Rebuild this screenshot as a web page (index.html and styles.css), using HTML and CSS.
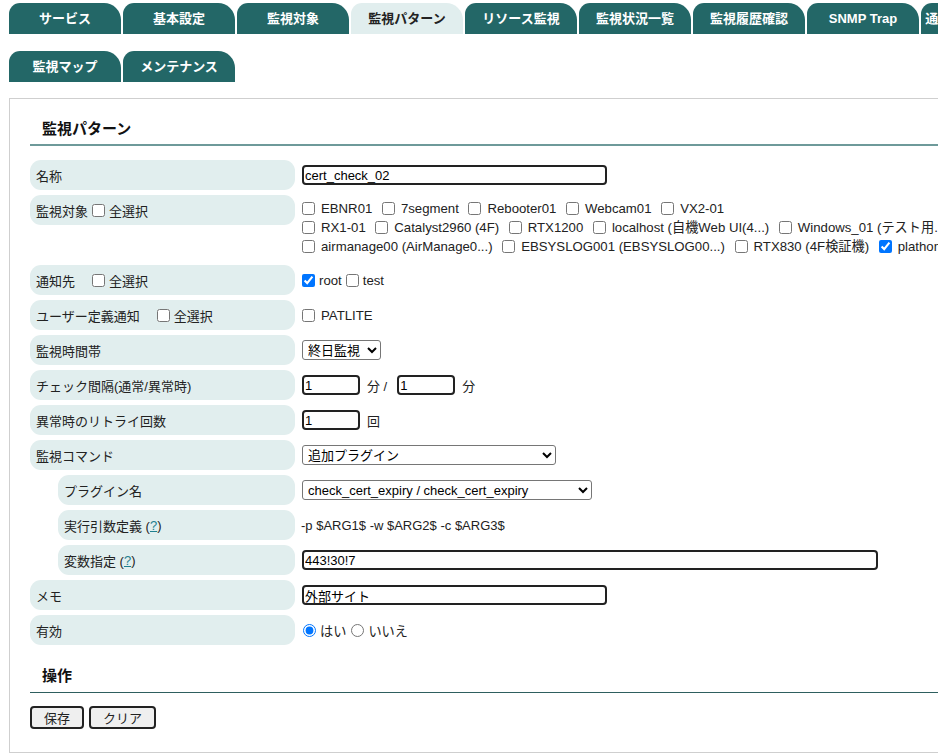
FILE: index.html
```html
<!DOCTYPE html>
<html lang="ja">
<head>
    <meta charset="UTF-8">
    <title>監視パターン</title>
    <link rel="stylesheet" href="styles.css">
</head>
<body>
    <div class="page">
        <nav class="tabs">
            <a class="tab">サービス</a>
            <a class="tab">基本設定</a>
            <a class="tab">監視対象</a>
            <a class="tab active">監視パターン</a>
            <a class="tab">リソース監視</a>
            <a class="tab">監視状況一覧</a>
            <a class="tab">監視履歴確認</a>
            <a class="tab">SNMP Trap</a>
            <a class="tab">通知ユーザー定義</a>
            <a class="tab">監視マップ</a>
            <a class="tab">メンテナンス</a>
        </nav>

        <div class="panel">
            <h2 class="section-title">監視パターン</h2>

            <div class="form">
                <div class="row">
                    <div class="label">名称</div>
                    <div class="value"><input type="text" class="text w-name" value="cert_check_02"></div>
                </div>

                <div class="row">
                    <div class="label">監視対象<input type="checkbox">全選択</div>
                    <div class="value list">
                        <label><input type="checkbox">EBNR01</label>
                        <label><input type="checkbox">7segment</label>
                        <label><input type="checkbox">Rebooter01</label>
                        <label><input type="checkbox">Webcam01</label>
                        <label><input type="checkbox">VX2-01</label><br>
                        <label><input type="checkbox">RX1-01</label>
                        <label><input type="checkbox">Catalyst2960 (4F)</label>
                        <label><input type="checkbox">RTX1200</label>
                        <label><input type="checkbox">localhost (自機Web UI(4...)</label>
                        <label><input type="checkbox">Windows_01 (テスト用...)</label><br>
                        <label><input type="checkbox">airmanage00 (AirManage0...)</label>
                        <label><input type="checkbox">EBSYSLOG001 (EBSYSLOG00...)</label>
                        <label><input type="checkbox">RTX830 (4F検証機)</label>
                        <label><input type="checkbox" checked>plathome01</label>
                    </div>
                </div>

                <div class="row">
                    <div class="label">通知先　<input type="checkbox">全選択</div>
                    <div class="value">
                        <label class="tight"><input type="checkbox" checked>root</label><label class="tight"><input type="checkbox">test</label>
                    </div>
                </div>

                <div class="row">
                    <div class="label">ユーザー定義通知　<input type="checkbox">全選択</div>
                    <div class="value"><label><input type="checkbox">PATLITE</label></div>
                </div>

                <div class="row">
                    <div class="label">監視時間帯</div>
                    <div class="value">
                        <select class="select w-time"><option>終日監視</option></select>
                    </div>
                </div>

                <div class="row">
                    <div class="label">チェック間隔(通常/異常時)</div>
                    <div class="value">
                        <input type="text" class="text w-small" value="1"><span class="unit">分 /</span><input type="text" class="text w-small" value="1"><span class="unit">分</span>
                    </div>
                </div>

                <div class="row">
                    <div class="label">異常時のリトライ回数</div>
                    <div class="value">
                        <input type="text" class="text w-small" value="1"><span class="unit">回</span>
                    </div>
                </div>

                <div class="row">
                    <div class="label">監視コマンド</div>
                    <div class="value">
                        <select class="select w-command"><option>追加プラグイン</option></select>
                    </div>
                </div>

                <div class="row">
                    <div class="label sub">プラグイン名</div>
                    <div class="value">
                        <select class="select w-plugin"><option>check_cert_expiry / check_cert_expiry</option></select>
                    </div>
                </div>

                <div class="row">
                    <div class="label sub">実行引数定義 (<a class="help">?</a>)</div>
                    <div class="value"><span class="plain">-p $ARG1$ -w $ARG2$ -c $ARG3$</span></div>
                </div>

                <div class="row">
                    <div class="label sub">変数指定 (<a class="help">?</a>)</div>
                    <div class="value"><input type="text" class="text w-args" value="443!30!7"></div>
                </div>

                <div class="row">
                    <div class="label">メモ</div>
                    <div class="value"><input type="text" class="text w-name" value="外部サイト"></div>
                </div>

                <div class="row">
                    <div class="label">有効</div>
                    <div class="value">
                        <label class="tight"><input type="radio" name="enabled" checked>はい</label><label class="tight"><input type="radio" name="enabled">いいえ</label>
                    </div>
                </div>
            </div>

            <h2 class="section-title dark">操作</h2>

            <div class="actions">
                <button class="btn">保存</button>
                <button class="btn">クリア</button>
            </div>
        </div>
    </div>
</body>
</html>
```

FILE: styles.css
```css
* {
    box-sizing: border-box;
}

html, body {
    margin: 0;
    padding: 0;
    overflow: hidden;
}

body {
    font-family: "Liberation Sans", "Noto Sans CJK JP", sans-serif;
    font-size: 13px;
    color: #222;
    background: #fff;
}

.page {
    width: 1400px;
    padding: 3px 0 0 9px;
}

/* tabs */
.tabs {
    display: flex;
    flex-wrap: wrap;
    gap: 17px 2px;
    width: 1024px;
}

.tab {
    display: block;
    width: 112px;
    height: 31px;
    line-height: 31px;
    text-align: center;
    background-color: #236767;
    color: #fff;
    font-weight: bold;
    font-size: 13px;
    white-space: nowrap;
    overflow: hidden;
    border-radius: 11px 17px 0 0;
    cursor: pointer;
}

.tab.active {
    background-color: #e1eeee;
    color: #222;
}

/* panel */
.panel {
    width: 1300px;
    margin-top: 16px;
    border: 1px solid #cfcfcf;
    padding: 0 20px 23px 20px;
}

.section-title {
    margin: 12px 0 0 0;
    padding: 8px 12px 5px;
    font-size: 15px;
    line-height: 20px;
    font-weight: bold;
    color: #111;
    border-bottom: 2px solid #6e9a9a;
}

.section-title.dark {
    margin-top: 13px;
    border-bottom: 1px solid #2e5f5f;
    padding-bottom: 6px;
}

.form {
    display: flex;
    flex-direction: column;
    gap: 5px;
    margin-top: 14px;
}

.row {
    display: flex;
    align-items: flex-start;
    gap: 3px;
}

.label {
    flex: 0 0 265px;
    height: 30px;
    display: flex;
    align-items: center;
    padding-left: 6px;
    background-color: #e1eeee;
    border-radius: 11px;
    white-space: nowrap;
}

.label.sub {
    flex-basis: 237px;
    margin-left: 28px;
}

.label input[type="checkbox"] {
    margin: 0 4px 0 4px;
    width: 13px;
    height: 13px;
}

.help {
    color: #1f7f8f;
    text-decoration: underline;
}

.value {
    min-height: 30px;
    display: flex;
    align-items: center;
    white-space: nowrap;
}

.value.list {
    display: block;
    padding: 4px 0 4px;
    line-height: 19px;
}

.value label {
    display: inline-flex;
    align-items: center;
    vertical-align: top;
    height: 19px;
    margin-right: 2px;
    font-size: 13.2px;
}

.value label.tight {
    margin-right: 0;
}

.value input[type="checkbox"] {
    width: 13px;
    height: 13px;
    margin: 0 6px 0 4px;
}

.value label.tight input[type="checkbox"] {
    margin-right: 4px;
}

.value input[type="radio"] {
    width: 13px;
    height: 13px;
    margin: 0 4px 0 5px;
}

.text {
    height: 20px;
    margin: 0 0 0 4px;
    padding: 0 1px;
    border: 2px solid #222;
    border-radius: 4px;
    font-family: "Liberation Sans", "Noto Sans CJK JP", sans-serif;
    font-size: 13px;
    color: #000;
    background: #fff;
}

.select {
    height: 20px;
    margin: 0 0 0 4px;
    padding: 0 0 0 1px;
    border: 1px solid #767676;
    border-radius: 3px;
    font-family: "Liberation Sans", "Noto Sans CJK JP", sans-serif;
    font-size: 13px;
    color: #000;
    background: #fff;
}

.unit {
    margin: 0 6px 0 7px;
}

.plain {
    padding-left: 3px;
}

.w-name { width: 305px; }
.w-small { width: 58px; }
.w-args { width: 576px; }
.w-time { width: 79px; }
.w-command { width: 254px; }
.w-plugin { width: 290px; }

/* buttons */
.actions {
    display: flex;
    gap: 5px;
    margin-top: 13px;
}

.btn {
    height: 23px;
    padding: 0 12px;
    border: 2px solid #222;
    border-radius: 4px;
    background-color: #efefef;
    font-family: "Liberation Sans", "Noto Sans CJK JP", sans-serif;
    font-size: 13px;
    color: #222;
    cursor: pointer;
}
```
